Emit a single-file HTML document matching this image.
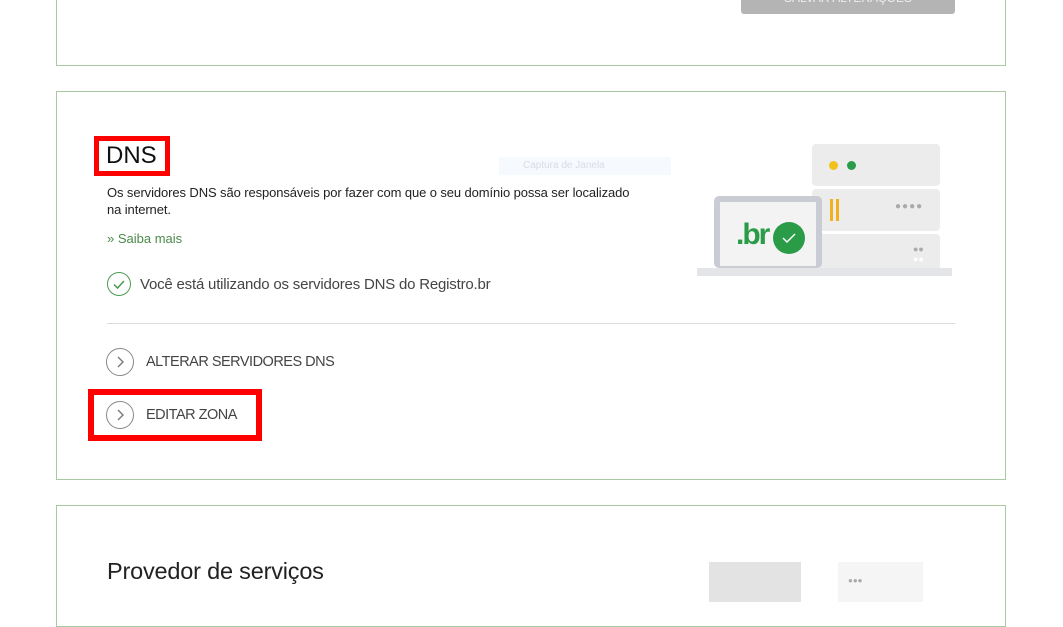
<!DOCTYPE html>
<html><head><meta charset="utf-8"><style>
body{margin:0;width:1063px;height:596px;background:#fff;position:relative;overflow:hidden;font-family:"Liberation Sans",sans-serif;color:#333}
.box{position:absolute;left:56px;width:948px;border:1px solid #a9c9a2;background:#fff}
.a{position:absolute}
.circ{position:absolute;width:26px;height:26px;border:1.5px solid #888;border-radius:50%;box-sizing:border-box}
.circ svg{position:absolute;left:0;top:0}
</style></head><body>
<div class="box" style="top:-10px;height:74px"></div>
<div class="a" style="left:741px;top:-10px;width:214px;height:24px;background:#b4b4b4;border-radius:3px;color:#eee;font-size:12px;text-align:center;line-height:16px">SALVAR ALTERAÇÕES</div>

<div class="box" style="top:91px;height:387px"></div>
<div class="a" style="left:94px;top:136px;width:66px;height:30px;border:5px solid #f00;background:#fff"></div>
<div class="a" style="left:106px;top:142px;font-size:24px;color:#111">DNS</div>
<div class="a" style="left:499px;top:157px;width:172px;height:18px;background:#f6f9fd;color:#d8dde4;font-size:10px;line-height:18px;padding-left:24px;box-sizing:border-box">Captura de Janela</div>
<div class="a" style="left:107px;top:184px;font-size:13px;line-height:17px;color:#222;width:560px;letter-spacing:-0.1px">Os servidores DNS são responsáveis por fazer com que o seu domínio possa ser localizado<br>na internet.</div>
<div class="a" style="left:107px;top:231px;font-size:13px;color:#4a8a4a">» Saiba mais</div>
<div class="circ" style="left:107px;top:272px;width:24px;height:24px;border-color:#4a9a55"><svg width="22" height="22"><path d="M6 11.5l3.5 3.5 6.5-7" fill="none" stroke="#4a9a55" stroke-width="1.5"/></svg></div>
<div class="a" style="left:140px;top:276px;font-size:15px;color:#444;letter-spacing:-0.2px">Você está utilizando os servidores DNS do Registro.br</div>
<div class="a" style="left:107px;top:323px;width:848px;height:1px;background:#ddd"></div>
<div class="circ" style="left:106px;top:348px;width:28px;height:28px"><svg width="26" height="26"><path d="M11 8l5 5-5 5" fill="none" stroke="#777" stroke-width="1.4"/></svg></div>
<div class="a" style="left:146px;top:354px;font-size:14.5px;color:#444;letter-spacing:-0.5px">ALTERAR SERVIDORES DNS</div>
<div class="a" style="left:88px;top:389px;width:162px;height:40px;border:6px solid #f00;background:#fff"></div>
<div class="circ" style="left:106px;top:401px;width:28px;height:28px"><svg width="26" height="26"><path d="M11 8l5 5-5 5" fill="none" stroke="#777" stroke-width="1.4"/></svg></div>
<div class="a" style="left:146px;top:407px;font-size:14.5px;color:#444;letter-spacing:-0.5px">EDITAR ZONA</div>

<div class="a" style="left:812px;top:144px;width:128px;height:42px;background:#ececec;border-radius:4px"></div>
<div class="a" style="left:829px;top:161px;width:9px;height:9px;border-radius:50%;background:#f2c21b"></div>
<div class="a" style="left:847px;top:161px;width:9px;height:9px;border-radius:50%;background:#2a9c48"></div>
<div class="a" style="left:812px;top:189px;width:128px;height:42px;background:#ececec;border-radius:4px"></div>
<div class="a" style="left:830px;top:199px;width:3px;height:22px;background:#f0b020"></div>
<div class="a" style="left:836px;top:199px;width:3px;height:22px;background:#f0b020"></div>
<div class="a" style="left:895px;top:201px;color:#aaa;font-size:10px;letter-spacing:1px">●●●●</div>
<div class="a" style="left:812px;top:234px;width:128px;height:40px;background:#ececec;border-radius:4px"></div>
<div class="a" style="left:913px;top:244px;color:#aaa;font-size:9px;line-height:10px">●●<br><span style="color:#fff">●●</span></div>
<div class="a" style="left:714px;top:196px;width:108px;height:72px;background:#c9ccd2;border-radius:5px"></div>
<div class="a" style="left:720px;top:202px;width:96px;height:64px;background:#f3f3f3"></div>
<div class="a" style="left:736px;top:218px;font-size:30px;font-weight:bold;color:#2a9c48;letter-spacing:-2px">.br</div>
<div class="a" style="left:773px;top:222px;width:32px;height:32px;border-radius:50%;background:#2a9c48"><svg width="32" height="32"><path d="M10 16l4 4 8-8" fill="none" stroke="#fff" stroke-width="1.5"/></svg></div>
<div class="a" style="left:697px;top:268px;width:255px;height:8px;background:#e4e5e8"></div>

<div class="box" style="top:505px;height:120px"></div>
<div class="a" style="left:107px;top:558px;font-size:23.5px;color:#222;letter-spacing:-0.2px">Provedor de serviços</div>
<div class="a" style="left:709px;top:562px;width:92px;height:40px;background:#e3e3e3"></div>
<div class="a" style="left:838px;top:562px;width:85px;height:40px;background:#f5f5f5;color:#aaa;font-size:8px;padding:14px 0 0 10px;box-sizing:border-box">●●●</div>
</body></html>
